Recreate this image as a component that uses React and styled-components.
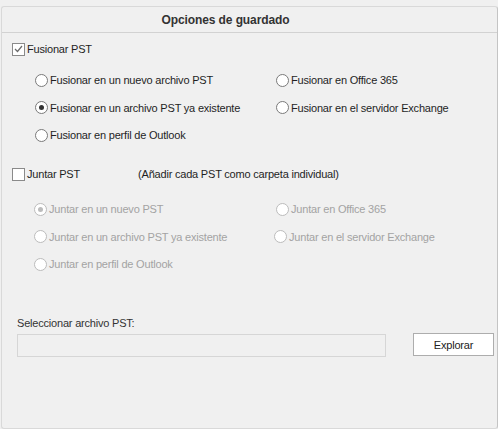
import React from 'react'
import styled, { createGlobalStyle } from 'styled-components'

const Global = createGlobalStyle`
  html, body {
    margin: 0;
    background: #f0f0f0;
    font-family: "Liberation Sans", Arial, sans-serif;
    font-size: 11px;
    letter-spacing: -0.2px;
    color: #1f1f1f;
  }
`

const Panel = styled.div`
  box-sizing: border-box;
  margin: 6px 0 0 1px;
  width: 497px;
  height: 423px;
  border: 1px solid #d9d9d9;
  border-right-color: #c4c4c4;
  border-radius: 3px;
  background: #f0f0f0;
`

const Header = styled.div`
  height: 25px;
  border-bottom: 1px solid #d2d2d2;
  display: flex;
  align-items: center;
  justify-content: center;
  padding-right: 48px;
  font-weight: bold;
  font-size: 12px;
  letter-spacing: -0.1px;
  color: #333;
`

const Body = styled.div`
  display: flex;
  flex-direction: column;
  padding: 0 0 0 10px;
`

const CheckRow = styled.label`
  display: flex;
  align-items: center;
  height: 16px;
  margin-top: ${p => p.$top}px;
`

const Box = styled.span`
  box-sizing: border-box;
  width: 13px;
  height: 13px;
  border: 1px solid #8a8a8a;
  background: #fff;
  margin-right: 2px;
  display: flex;
  align-items: center;
  justify-content: center;
`

const Note = styled.span`
  margin-left: 58px;
`

const RadioGrid = styled.div`
  display: grid;
  grid-template-columns: 241px 1fr;
  row-gap: 11.5px;
  margin-top: ${p => p.$top}px;
  padding-left: 23px;
  color: ${p => (p.$disabled ? '#a3a3a3' : '#1f1f1f')};
`

const RadioRow = styled.div`
  display: flex;
  align-items: center;
  height: 16px;
  margin-left: ${p => p.$shift || 0}px;
`

const Circle = styled.span`
  box-sizing: border-box;
  width: 13px;
  height: 13px;
  border-radius: 50%;
  border: 1px solid ${p => (p.$disabled ? '#bcbcbc' : '#7a7a7a')};
  background: #fff;
  margin-right: 2px;
  display: flex;
  align-items: center;
  justify-content: center;
  &::after {
    content: '';
    display: ${p => (p.$on ? 'block' : 'none')};
    width: 5px;
    height: 5px;
    border-radius: 50%;
    background: ${p => (p.$disabled ? '#bcbcbc' : '#333')};
  }
`

const FileLabel = styled.div`
  margin-top: 43px;
  padding-left: 5px;
  height: 16px;
  display: flex;
  align-items: center;
  color: #333;
`

const FileRow = styled.div`
  display: flex;
  align-items: center;
  margin-top: 3px;
  padding-left: 5px;
`

const PathInput = styled.div`
  box-sizing: border-box;
  width: 369px;
  height: 23px;
  border: 1px solid #d6d6d6;
  background: #f0f0f0;
`

const Button = styled.button`
  box-sizing: border-box;
  margin-left: 27px;
  margin-top: -2px;
  width: 81px;
  height: 23px;
  border: 1px solid #adadad;
  background: #fff;
  font-family: inherit;
  font-size: 11px;
  letter-spacing: -0.2px;
  color: #222;
  padding: 0;
`

const Check = ({ on }) => (
  <Box>
    {on && (
      <svg width="9" height="8" viewBox="0 0 9 8">
        <path d="M1 4 L3.5 6.5 L8 1" fill="none" stroke="#6a6a6a" strokeWidth="1.2" />
      </svg>
    )}
  </Box>
)

const Radio = ({ label, on, disabled, shift }) => (
  <RadioRow $shift={shift}>
    <Circle $on={on} $disabled={disabled} />
    {label}
  </RadioRow>
)

export default function App() {
  return (
    <>
      <Global />
      <Panel>
        <Header>Opciones de guardado</Header>
        <Body>
          <CheckRow $top={8}>
            <Check on />
            Fusionar PST
          </CheckRow>
          <RadioGrid $top={15}>
            <Radio label="Fusionar en un nuevo archivo PST" />
            <Radio label="Fusionar en Office 365" />
            <Radio label="Fusionar en un archivo PST ya existente" on />
            <Radio label="Fusionar en el servidor Exchange" />
            <Radio label="Fusionar en perfil de Outlook" />
          </RadioGrid>
          <CheckRow $top={23}>
            <Check />
            Juntar PST
            <Note>(Añadir cada PST como carpeta individual)</Note>
          </CheckRow>
          <RadioGrid $top={19} $disabled>
            <Radio label="Juntar en un nuevo PST" on disabled shift={-1} />
            <Radio label="Juntar en Office 365" disabled />
            <Radio label="Juntar en un archivo PST ya existente" disabled shift={-1} />
            <Radio label="Juntar en el servidor Exchange" disabled shift={-2} />
            <Radio label="Juntar en perfil de Outlook" disabled shift={-1} />
          </RadioGrid>
          <FileLabel>Seleccionar archivo PST:</FileLabel>
          <FileRow>
            <PathInput />
            <Button>Explorar</Button>
          </FileRow>
        </Body>
      </Panel>
    </>
  )
}
